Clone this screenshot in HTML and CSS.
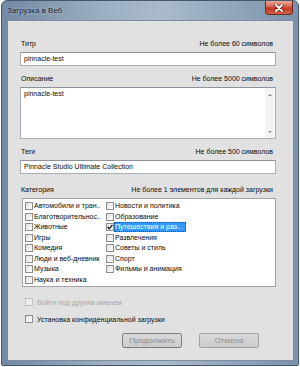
FILE: index.html
```html
<!DOCTYPE html>
<html lang="ru">
<head>
    <meta charset="UTF-8">
    <title>Загрузка в Веб</title>
    <link rel="stylesheet" href="styles.css">
</head>
<body>

    <div class="window">
        <div class="titlebar">
            <span class="title">Загрузка в Веб</span>
            <div class="close-btn">
                <svg width="10" height="8" viewBox="0 0 10 8">
                    <path d="M2 1 L8 7 M8 1 L2 7" stroke="#5a1e16" stroke-width="3.2" stroke-linecap="round"/>
                    <path d="M2 1 L8 7 M8 1 L2 7" stroke="#fff" stroke-width="1.8" stroke-linecap="round"/>
                </svg>
            </div>
        </div>

        <div class="client">
            <div class="group first">
                <div class="label-row"><span>Титр</span><span>Не более 60 символов</span></div>
                <div class="textbox">pinnacle-test</div>
            </div>

            <div class="group">
                <div class="label-row"><span>Описание</span><span>Не более 5000 символов</span></div>
                <div class="textarea">
                    <div class="textarea-text">pinnacle-test</div>
                    <div class="scrollbar">
                        <span class="arrow up"></span>
                        <span class="arrow down"></span>
                    </div>
                </div>
            </div>

            <div class="group">
                <div class="label-row"><span>Теги</span><span>Не более 500 символов</span></div>
                <div class="textbox">Pinnacle Studio Ultimate Collection</div>
            </div>

            <div class="group category">
                <div class="label-row"><span>Категория</span><span>Не более 1 элементов для каждой загрузки</span></div>
                <div class="listbox">
                    <div class="item"><span class="check"></span><span class="text">Автомобили и тран..</span></div>
                    <div class="item"><span class="check"></span><span class="text">Благотворительнос..</span></div>
                    <div class="item"><span class="check"></span><span class="text">Животные</span></div>
                    <div class="item"><span class="check"></span><span class="text">Игры</span></div>
                    <div class="item"><span class="check"></span><span class="text">Комедия</span></div>
                    <div class="item"><span class="check"></span><span class="text">Люди и веб-дневник</span></div>
                    <div class="item"><span class="check"></span><span class="text">Музыка</span></div>
                    <div class="item"><span class="check"></span><span class="text">Наука и техника</span></div>
                    <div class="item"><span class="check"></span><span class="text">Новости и политика</span></div>
                    <div class="item"><span class="check"></span><span class="text">Образование</span></div>
                    <div class="item"><span class="check checked">
                        <svg width="6" height="6" viewBox="0 0 6 6"><path d="M0.6 3 L2.3 4.8 L5.4 0.8" stroke="#111" stroke-width="1.3" fill="none"/></svg>
                    </span><span class="text selected">Путешествия и раз...</span></div>
                    <div class="item"><span class="check"></span><span class="text">Развлечения</span></div>
                    <div class="item"><span class="check"></span><span class="text">Советы и стиль</span></div>
                    <div class="item"><span class="check"></span><span class="text">Спорт</span></div>
                    <div class="item"><span class="check"></span><span class="text">Фильмы и анимация</span></div>
                </div>
            </div>

            <div class="option disabled"><span class="check"></span>Войти под другим именем</div>
            <div class="option private"><span class="check"></span>Установка конфиденциальной загрузки</div>

            <div class="buttons">
                <button class="btn default">Продолжить</button>
                <button class="btn">Отмена</button>
            </div>
        </div>
    </div>

</body>
</html>
```

FILE: styles.css
```css
body {
    margin: 0;
    background-color: #fff;
    font-family: "Liberation Sans", Arial, sans-serif;
    font-size: 7px;
    color: #0a0a0a;
}
.window {
    box-sizing: border-box;
    width: 298px;
    height: 366px;
    margin-left: 1px;
    border: 1px solid #46586c;
    border-radius: 6px 6px 2px 2px;
    background: linear-gradient(90deg, #7189a3 0%, #9db0c3 35%, #a9bacb 55%, #8ea4ba 80%, #7a92ab 100%);
    padding: 0 4px 4px 5px;
    display: flex;
    flex-direction: column;
}
.titlebar {
    height: 19px;
    display: flex;
    justify-content: space-between;
    align-items: flex-start;
}
.title {
    margin-top: 5px;
    font-size: 8px;
    color: #16202c;
    text-shadow: 0 0 3px rgba(235, 242, 250, 0.8);
}
.close-btn {
    box-sizing: border-box;
    width: 28px;
    height: 14px;
    margin-right: 1px;
    border: 1px solid #6d2a20;
    border-top: none;
    border-radius: 0 0 4px 4px;
    background: linear-gradient(#e9a999 0%, #d86a55 40%, #c2391f 55%, #d0614a 100%);
    display: flex;
    align-items: center;
    justify-content: center;
}
.client {
    flex: 1;
    background-color: #e1e1e1;
    border: 1px solid #7b8da1;
    padding: 0 17px 0 12px;
}
.group {
    margin-top: 9px;
}
.group.first {
    margin-top: 19px;
}
.group.category {
    margin-top: 12px;
}
.label-row {
    display: flex;
    justify-content: space-between;
    height: 8px;
    line-height: 8px;
    padding: 0 3px 0 1px;
    margin-bottom: 4px;
    white-space: nowrap;
}
.textbox {
    box-sizing: border-box;
    height: 14px;
    line-height: 12px;
    padding-left: 3px;
    background-color: #fff;
    border: 1px solid #a9afb7;
    border-top-color: #8c939c;
}
.textarea {
    box-sizing: border-box;
    height: 52px;
    background-color: #fff;
    border: 1px solid #a9afb7;
    border-top-color: #8c939c;
    display: flex;
}
.textarea-text {
    flex: 1;
    padding: 2px 3px;
    line-height: 8px;
}
.scrollbar {
    width: 10px;
    background-color: #f4f4f4;
    display: flex;
    flex-direction: column;
    justify-content: space-between;
    align-items: center;
    padding: 6px 0 5px;
}
.arrow {
    width: 0;
    height: 0;
    border-left: 2px solid transparent;
    border-right: 2px solid transparent;
}
.arrow.up {
    border-bottom: 2px solid #8a8a8a;
}
.arrow.down {
    border-top: 2px solid #8a8a8a;
}
.listbox {
    box-sizing: border-box;
    height: 89px;
    margin-left: 2px;
    padding: 2px 0 0 2px;
    background-color: #fff;
    border: 1px solid #a0a4aa;
    display: grid;
    grid-template-columns: 81px 1fr;
    grid-template-rows: repeat(8, 10.5px);
    grid-auto-flow: column;
}
.item {
    display: flex;
    align-items: center;
    white-space: nowrap;
    overflow: hidden;
}
.check {
    box-sizing: border-box;
    width: 8px;
    height: 8px;
    flex-shrink: 0;
    border: 1px solid #8b8d90;
    background: linear-gradient(135deg, #e2e2e2, #fdfdfd);
    display: flex;
    align-items: center;
    justify-content: center;
}
.item .text {
    padding: 0 1px;
    line-height: 10px;
}
.item .text.selected {
    background-color: #3399ff;
    color: #fff;
    outline: 1px dotted #1a4d80;
    outline-offset: -1px;
    padding-right: 3px;
}
.option {
    display: flex;
    align-items: center;
    gap: 4px;
    height: 10px;
    padding-left: 5px;
    white-space: nowrap;
}
.option.disabled {
    margin-top: 10px;
    color: #a6a6a6;
}
.option.disabled .check {
    border-color: #c2c2c2;
    background: #ececec;
}
.option.private {
    margin-top: 7px;
}
.buttons {
    display: flex;
    justify-content: flex-end;
    gap: 17px;
    margin: 9px 17px 0 0;
}
.btn {
    box-sizing: border-box;
    width: 60px;
    height: 15px;
    padding: 0;
    font-family: "Liberation Sans", Arial, sans-serif;
    font-size: 8px;
    color: #8e8e8e;
    border: 1px solid #a2a2a2;
    border-radius: 2px;
    background: linear-gradient(#d9d9d9, #cbcbcb);
}
.btn.default {
    border-color: #7f7f7f;
}
```
